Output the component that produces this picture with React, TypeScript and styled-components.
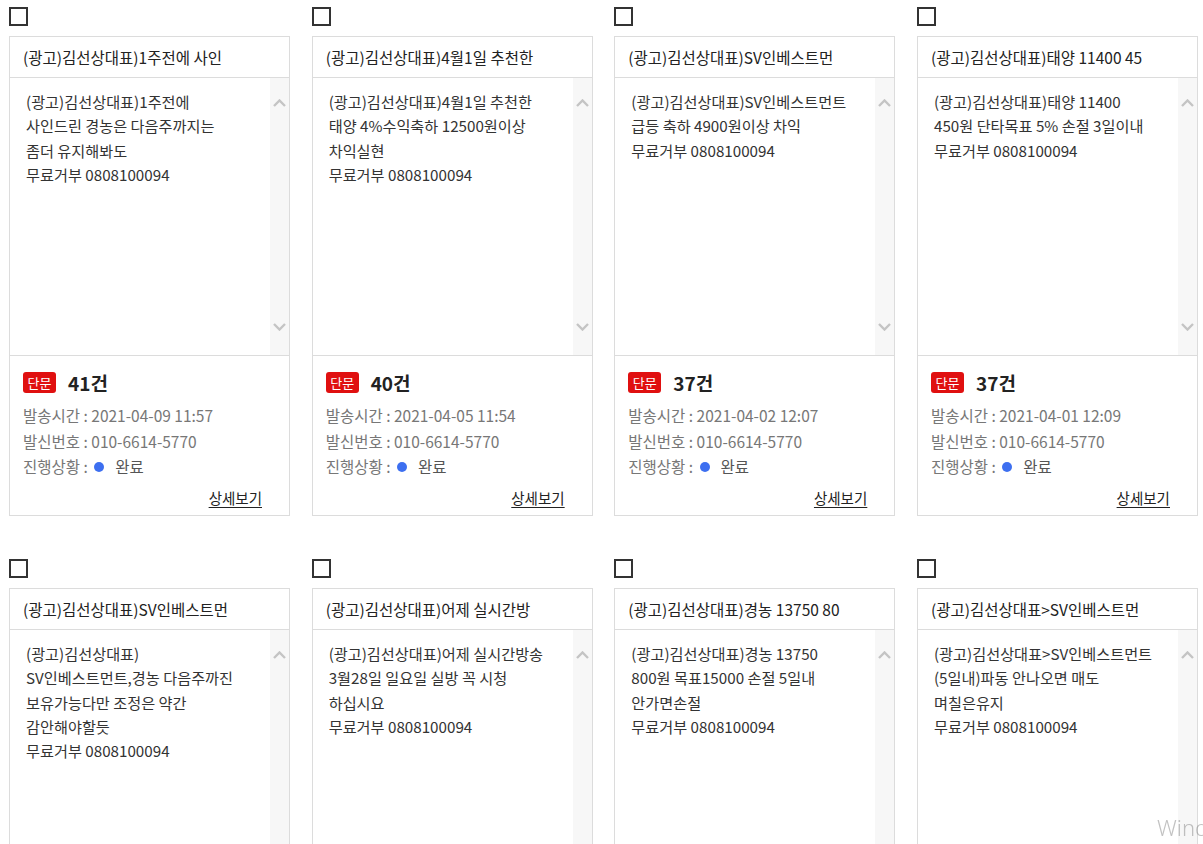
import React from 'react';
import styled, { createGlobalStyle } from 'styled-components';

const GlobalStyle = createGlobalStyle`
  html, body {
    margin: 0;
    padding: 0;
    background: #fff;
    overflow: hidden;
  }
  body {
    font-family: 'Noto Sans CJK KR', 'Noto Sans', sans-serif;
    color: #222;
  }
`;

interface Message {
  title: string;
  lines: string[];
  count: number;
  sentAt: string;
}

const messages: Message[] = [
  {
    title: '(광고)김선상대표)1주전에 사인',
    lines: ['(광고)김선상대표)1주전에', '사인드린 경농은 다음주까지는', '좀더 유지해봐도', '무료거부 0808100094'],
    count: 41,
    sentAt: '2021-04-09 11:57',
  },
  {
    title: '(광고)김선상대표)4월1일 추천한',
    lines: ['(광고)김선상대표)4월1일 추천한', '태양 4%수익축하 12500원이상', '차익실현', '무료거부 0808100094'],
    count: 40,
    sentAt: '2021-04-05 11:54',
  },
  {
    title: '(광고)김선상대표)SV인베스트먼',
    lines: ['(광고)김선상대표)SV인베스트먼트', '급등 축하 4900원이상 차익', '무료거부 0808100094'],
    count: 37,
    sentAt: '2021-04-02 12:07',
  },
  {
    title: '(광고)김선상대표)태양 11400 45',
    lines: ['(광고)김선상대표)태양 11400', '450원 단타목표 5% 손절 3일이내', '무료거부 0808100094'],
    count: 37,
    sentAt: '2021-04-01 12:09',
  },
  {
    title: '(광고)김선상대표)SV인베스트먼',
    lines: ['(광고)김선상대표)', 'SV인베스트먼트,경농 다음주까진', '보유가능다만 조정은 약간', '감안해야할듯', '무료거부 0808100094'],
    count: 36,
    sentAt: '2021-03-31 12:02',
  },
  {
    title: '(광고)김선상대표)어제 실시간방',
    lines: ['(광고)김선상대표)어제 실시간방송', '3월28일 일요일 실방 꼭 시청', '하십시요', '무료거부 0808100094'],
    count: 36,
    sentAt: '2021-03-29 11:48',
  },
  {
    title: '(광고)김선상대표)경농 13750 80',
    lines: ['(광고)김선상대표)경농 13750', '800원 목표15000 손절 5일내', '안가면손절', '무료거부 0808100094'],
    count: 35,
    sentAt: '2021-03-26 12:05',
  },
  {
    title: '(광고)김선상대표>SV인베스트먼',
    lines: ['(광고)김선상대표>SV인베스트먼트', '(5일내)파동 안나오면 매도', '며칠은유지', '무료거부 0808100094'],
    count: 35,
    sentAt: '2021-03-25 11:59',
  },
];

const Page = styled.div`
  height: 844px;
  overflow: hidden;
  padding: 7px 0 0 9px;
  box-sizing: border-box;
`;

const Grid = styled.ul`
  list-style: none;
  margin: 0;
  padding: 0;
  width: 1189px;
  display: grid;
  grid-template-columns: repeat(4, 281px);
  justify-content: space-between;
  row-gap: 43px;
`;

const Item = styled.li`
  display: flex;
  flex-direction: column;
  gap: 10px;
`;

const CheckBox = styled.span`
  display: block;
  width: 19px;
  height: 19px;
  box-sizing: border-box;
  border: 2px solid #333;
  background: #fff;
`;

const Card = styled.div`
  width: 281px;
  height: 480px;
  box-sizing: border-box;
  border: 1px solid #dcdcdc;
  display: flex;
  flex-direction: column;
`;

const CardTitle = styled.div`
  height: 41px;
  box-sizing: border-box;
  border-bottom: 1px solid #dcdcdc;
  padding: 0 13px;
  display: flex;
  align-items: center;
  font-size: 15.5px;
  color: #222;
  white-space: nowrap;
  overflow: hidden;
`;

const BodyArea = styled.div`
  height: 278px;
  box-sizing: border-box;
  border-bottom: 1px solid #dcdcdc;
  display: flex;
`;

const BodyText = styled.div`
  flex: 1;
  padding: 11px 0 0 16px;
  font-size: 15.2px;
  line-height: 24.3px;
  color: #333;
  white-space: nowrap;
  overflow: hidden;
`;

const ScrollTrack = styled.div`
  width: 19px;
  background: #f7f7f7;
  display: flex;
  flex-direction: column;
  align-items: center;
  justify-content: space-between;
  padding: 21px 0 24px;
  box-sizing: border-box;
`;

const Footer = styled.div`
  flex: 1;
  padding: 15px 13px 0;
  display: flex;
  flex-direction: column;
`;

const CountRow = styled.div`
  display: flex;
  align-items: center;
  gap: 12px;
  height: 22px;
  margin-bottom: 10px;
`;

const Badge = styled.span`
  display: inline-flex;
  align-items: center;
  justify-content: center;
  width: 33px;
  height: 21px;
  border-radius: 3px;
  background: #e01010;
  color: #fff;
  font-size: 13px;
`;

const Count = styled.span`
  font-size: 19px;
  font-weight: 700;
  color: #222;
`;

const InfoLine = styled.div`
  font-size: 15.5px;
  line-height: 25.5px;
  color: #777;
  display: flex;
  align-items: center;
`;

const StatusDot = styled.span`
  display: inline-block;
  width: 10px;
  height: 10px;
  border-radius: 50%;
  background: #3d6ff0;
  margin: 0 11px 0 3px;
`;

const Status = styled.span`
  color: #555;
`;

const DetailLink = styled.a`
  align-self: flex-end;
  margin: 7px 14px 0 0;
  font-size: 14.5px;
  color: #222;
  text-decoration: underline;
  text-underline-offset: 3px;
  cursor: pointer;
`;

const Watermark = styled.div`
  position: fixed;
  left: 1157px;
  top: 813px;
  white-space: nowrap;
  color: rgba(120, 120, 120, 0.45);
  font-family: 'Noto Sans', sans-serif;
  font-size: 22px;
  font-weight: 300;
  line-height: 28px;
  pointer-events: none;
`;

const WatermarkSub = styled.div`
  font-size: 13px;
  line-height: 16px;
`;

const Chevron = ({ up }: { up?: boolean }) => (
  <svg width="13" height="8" viewBox="0 0 13 8">
    <polyline
      points={up ? '1,7 6.5,1.5 12,7' : '1,1 6.5,6.5 12,1'}
      fill="none"
      stroke="#c4c4c4"
      strokeWidth="2.4"
    />
  </svg>
);

const MessageCard = ({ msg }: { msg: Message }) => (
  <Item>
    <CheckBox />
    <Card>
      <CardTitle>{msg.title}</CardTitle>
      <BodyArea>
        <BodyText>
          {msg.lines.map((l, i) => (
            <div key={i}>{l}</div>
          ))}
        </BodyText>
        <ScrollTrack>
          <Chevron up />
          <Chevron />
        </ScrollTrack>
      </BodyArea>
      <Footer>
        <CountRow>
          <Badge>단문</Badge>
          <Count>{msg.count}건</Count>
        </CountRow>
        <InfoLine>발송시간 : {msg.sentAt}</InfoLine>
        <InfoLine>발신번호 : 010-6614-5770</InfoLine>
        <InfoLine>
          진행상황 :&nbsp;<StatusDot />
          <Status>완료</Status>
        </InfoLine>
        <DetailLink>상세보기</DetailLink>
      </Footer>
    </Card>
  </Item>
);

export default function App() {
  return (
    <>
      <GlobalStyle />
      <Page>
        <Grid>
          {messages.map((m, i) => (
            <MessageCard key={i} msg={m} />
          ))}
        </Grid>
      </Page>
      <Watermark>
        Windows 정품 인증
        <WatermarkSub>[설정]으로 이동하여 Windows를 정품 인증합니다.</WatermarkSub>
      </Watermark>
    </>
  );
}
